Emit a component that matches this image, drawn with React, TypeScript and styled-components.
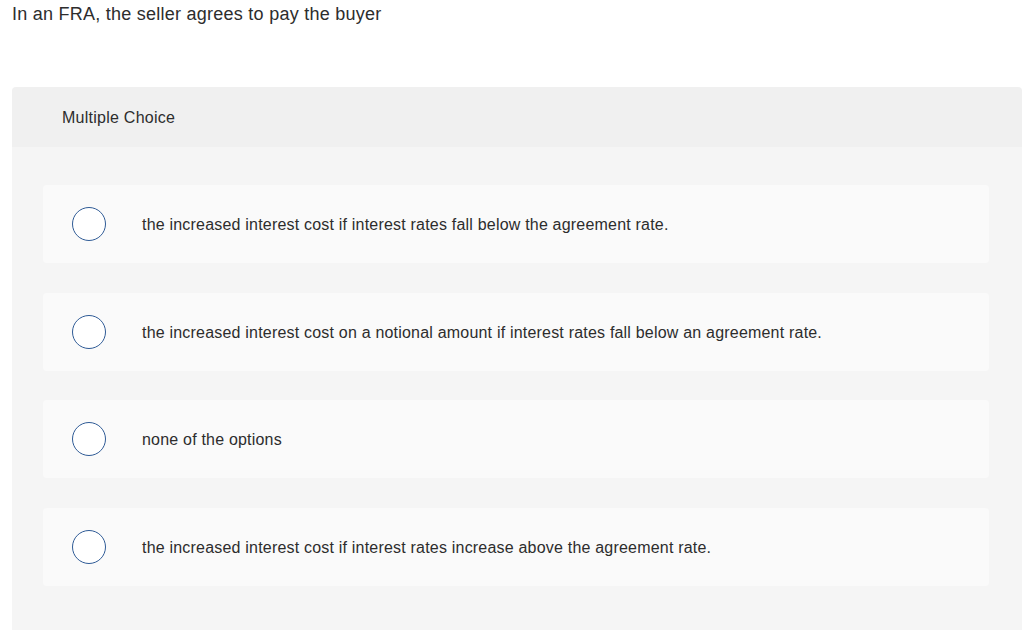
import React from 'react';
import styled, { createGlobalStyle } from 'styled-components';

const GlobalStyle = createGlobalStyle`
  body {
    margin: 0;
    background: #ffffff;
    font-family: "Liberation Sans", Arial, sans-serif;
    color: #333333;
  }
`;

const options = [
  'the increased interest cost if interest rates fall below the agreement rate.',
  'the increased interest cost on a notional amount if interest rates fall below an agreement rate.',
  'none of the options',
  'the increased interest cost if interest rates increase above the agreement rate.',
];

const App: React.FC = () => {
  return (
    <>
      <GlobalStyle />
      <Page>
        <Question>In an FRA, the seller agrees to pay the buyer</Question>
        <Panel>
          <PanelHeader>Multiple Choice</PanelHeader>
          <PanelBody>
            {options.map((text) => (
              <Option key={text}>
                <Radio />
                <OptionText>{text}</OptionText>
              </Option>
            ))}
          </PanelBody>
        </Panel>
      </Page>
    </>
  );
};

const Page = styled.div`
  width: 1024px;
  height: 630px;
  overflow: hidden;
`;

const Question = styled.div`
  padding: 4px 12px 0;
  font-size: 18px;
  line-height: 20px;
  letter-spacing: 0.25px;
  color: #2d2d2d;
`;

const Panel = styled.div`
  margin: 63px 2px 0 12px;
  border-radius: 4px 4px 0 0;
  overflow: hidden;
`;

const PanelHeader = styled.div`
  height: 60px;
  box-sizing: border-box;
  display: flex;
  align-items: center;
  padding: 2px 0 0 50px;
  background: #f0f0f0;
  font-size: 16px;
  letter-spacing: 0.25px;
  color: #2d2d2d;
`;

const PanelBody = styled.div`
  display: flex;
  flex-direction: column;
  gap: 29.7px;
  padding: 38px 33px 60px 31px;
  background: #f5f5f5;
`;

const Option = styled.div`
  height: 78px;
  display: flex;
  align-items: center;
  padding-left: 29px;
  gap: 36px;
  background: #fafafa;
  border-radius: 4px;
`;

const Radio = styled.span`
  flex: none;
  width: 34px;
  height: 34px;
  box-sizing: border-box;
  border: 1.5px solid #2f5b96;
  border-radius: 50%;
  background: #ffffff;
`;

const OptionText = styled.span`
  padding-top: 2px;
  font-size: 16px;
  letter-spacing: 0.2px;
  color: #2d2d2d;
`;

export default App;
